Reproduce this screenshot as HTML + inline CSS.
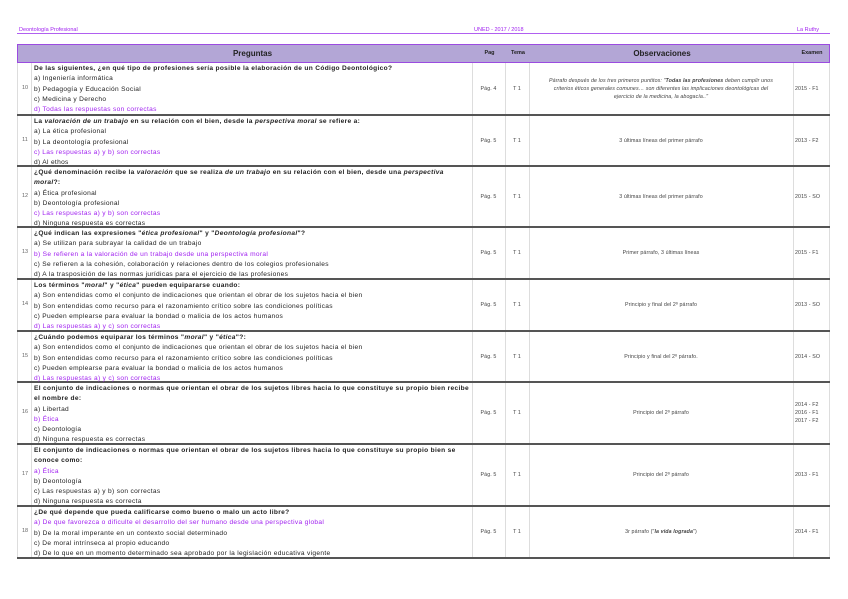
<!DOCTYPE html>
<html><head><meta charset="utf-8"><style>
*{margin:0;padding:0;box-sizing:border-box}
body{width:848px;height:599px;background:#fff;font-family:"Liberation Sans",sans-serif;color:#222;position:relative;overflow:hidden}
.hd{position:absolute;top:27px;font-size:5.5px;color:#a020f0}
.hl{position:absolute;left:17px;width:813px;top:33px;height:1px;background:#b060f0}
.th{position:absolute;top:44px;height:19px;left:17px;width:813px;background:#b3a6d6;border:1px solid #9b4be0}
.th div{position:absolute;top:0;height:17px;line-height:17px;text-align:center;font-weight:bold}
.row{position:absolute;left:17px;width:813px;border-bottom:2px solid #555}
.c{position:absolute;top:0;bottom:0;border-left:1px solid #ddd}
.q{position:absolute;left:17px;top:1px;font-size:6.6px;line-height:10.3px;white-space:nowrap;letter-spacing:0.32px}
.p{color:#a020f0}
.n{position:absolute;left:0;width:16px;text-align:center;font-size:5.5px;color:#666}
.m{position:absolute;display:flex;align-items:center;justify-content:center;text-align:center;font-size:5.3px;color:#444;top:0;bottom:0;line-height:8px;letter-spacing:0.1px}
</style></head><body>
<div class="hd" style="left:19px">Deontología Profesional</div>
<div class="hd" style="left:474px">UNED - 2017 / 2018</div>
<div class="hd" style="left:797px">La Ruthy</div>
<div class="hl"></div>
<div class="th">
<div style="left:14px;width:441px;font-size:8px">Preguntas</div>
<div style="left:455px;width:33px;font-size:5.5px">Pag</div>
<div style="left:488px;width:24px;font-size:5.5px">Tema</div>
<div style="left:512px;width:264px;font-size:8px">Observaciones</div>
<div style="left:776px;width:36px;font-size:5.5px">Examen</div>
</div>

<script>
const rows=[
[63,53,10,['<b>De las siguientes, ¿en qué tipo de profesiones sería posible la elaboración de un Código Deontológico?</b>','a) Ingeniería informática','b) Pedagogía y Educación Social','c) Medicina y Derecho','<span class="p">d) Todas las respuestas son correctas</span>'],'Pág. 4','<i>Párrafo después de los tres primeros puntitos: "<b>Todas las profesiones</b> deben cumplir unos<br>criterios éticos generales comunes… son diferentes las implicaciones deontológicas del<br>ejercicio de la medicina, la abogacía.."</i>','2015 - F1'],
[116,51,11,['<b>La <i>valoración de un trabajo</i> en su relación con el bien, desde la <i>perspectiva moral</i> se refiere a:</b>','a) La ética profesional','b) La deontología profesional','<span class="p">c) Las respuestas a) y b) son correctas</span>','d) Al ethos'],'Pág. 5','3 últimas líneas del primer párrafo','2013 - F2'],
[167,61,12,['<b>¿Qué denominación recibe la <i>valoración</i> que se realiza <i>de un trabajo</i> en su relación con el bien, desde una <i>perspectiva</i></b>','<b><i>moral</i>?:</b>','a) Ética profesional','b) Deontología profesional','<span class="p">c) Las respuestas a) y b) son correctas</span>','d) Ninguna respuesta es correctas'],'Pág. 5','3 últimas líneas del primer párrafo','2015 - SO'],
[228,52,13,['<b>¿Qué indican las expresiones "<i>ética profesional</i>" y "<i>Deontología profesional</i>"?</b>','a) Se utilizan para subrayar la calidad de un trabajo','<span class="p">b) Se refieren a la valoración de un trabajo desde una perspectiva moral</span>','c) Se refieren a la cohesión, colaboración y relaciones dentro de los colegios profesionales','d) A la trasposición de las normas jurídicas para el ejercicio de las profesiones'],'Pág. 5','Primer párrafo, 3 últimas líneas','2015 - F1'],
[280,52,14,['<b>Los términos "<i>moral</i>" y "<i>ética</i>" pueden equipararse cuando:</b>','a) Son entendidas como el conjunto de indicaciones que orientan el obrar de los sujetos hacia el bien','b) Son entendidas como recurso para el razonamiento crítico sobre las condiciones políticas','c) Pueden emplearse para evaluar la bondad o malicia de los actos humanos','<span class="p">d) Las respuestas a) y c) son correctas</span>'],'Pág. 5','Principio y final del 2º párrafo','2013 - SO'],
[332,51,15,['<b>¿Cuándo podemos equiparar los términos "<i>moral</i>" y "<i>ética</i>"?:</b>','a) Son entendidos como el conjunto de indicaciones que orientan el obrar de los sujetos hacia el bien','b) Son entendidas como recurso para el razonamiento crítico sobre las condiciones políticas','c) Pueden emplearse para evaluar la bondad o malicia de los actos humanos','<span class="p">d) Las respuestas a) y c) son correctas</span>'],'Pág. 5','Principio y final del 2º párrafo.','2014 - SO'],
[383,62,16,['<b>El conjunto de indicaciones o normas que orientan el obrar de los sujetos libres hacia lo que constituye su propio bien recibe</b>','<b>el nombre de:</b>','a) Libertad','<span class="p">b) Ética</span>','c) Deontología','d) Ninguna respuesta es correctas'],'Pág. 5','Principio del 2º párrafo','2014 - F2<br>2016 - F1<br>2017 - F2'],
[445,62,17,['<b>El conjunto de indicaciones o normas que orientan el obrar de los sujetos libres hacia lo que constituye su propio bien se</b>','<b>conoce como:</b>','<span class="p">a) Ética</span>','b) Deontología','c) Las respuestas a) y b) son correctas','d) Ninguna respuesta es correcta'],'Pág. 5','Principio del 2º párrafo','2013 - F1'],
[507,52,18,['<b>¿De qué depende que pueda calificarse como bueno o malo un acto libre?</b>','<span class="p">a) De que favorezca o dificulte el desarrollo del ser humano desde una perspectiva global</span>','b) De la moral imperante en un contexto social determinado','c) De moral intrínseca al propio educando','d) De lo que en un momento determinado sea aprobado por la legislación educativa vigente'],'Pág. 5','3r párrafo ("<b><i>la vida lograda</i></b>")','2014 - F1']
];
let h='';
for(const r of rows){
 h+=`<div class="row" style="top:${r[0]}px;height:${r[1]}px">
 <div class="n" style="top:${r[1]/2-5}px">${r[2]}</div>
 <div class="c" style="left:0"></div><div class="c" style="left:14px"></div><div class="c" style="left:455px"></div><div class="c" style="left:488px"></div><div class="c" style="left:512px"></div><div class="c" style="left:776px"></div><div class="c" style="left:812px"></div>
 <div class="q">${r[3].join('<br>')}</div>
 <div class="m" style="left:455px;width:33px">${r[4]}</div>
 <div class="m" style="left:488px;width:24px">T 1</div>
 <div class="m" style="left:512px;width:264px">${r[5]}</div>
 <div class="m" style="left:778px;width:34px;justify-content:flex-start;text-align:left">${r[6]}</div>
 </div>`;
}
document.write(h);
</script>
</body></html>
